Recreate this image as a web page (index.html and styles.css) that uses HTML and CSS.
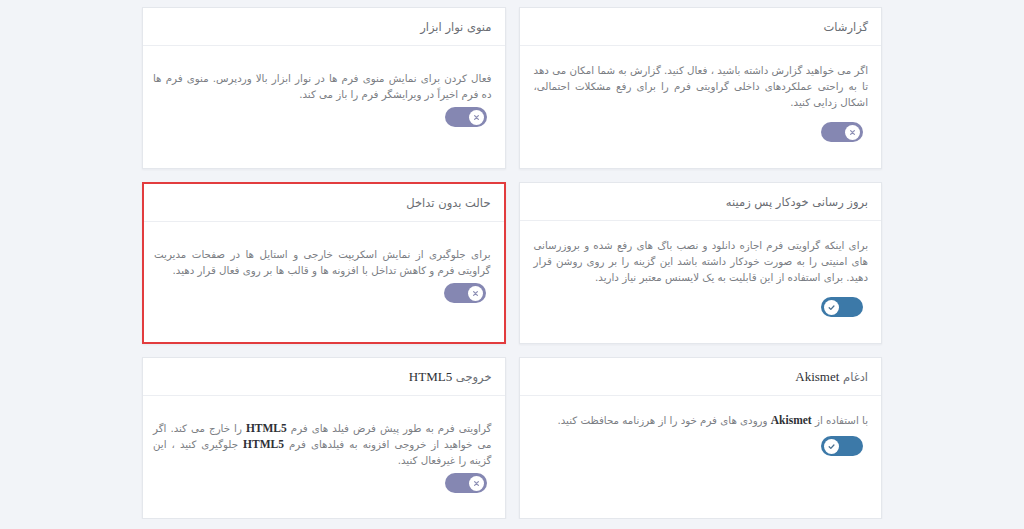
FILE: index.html
```html
<!DOCTYPE html>
<html lang="fa" dir="rtl">
<head>
<meta charset="utf-8">
<title>تنظیمات</title>
<link rel="stylesheet" href="styles.css">
</head>
<body>
<main class="grid">
  <section class="card">
    <header class="card-head"><span class="title">گزارشات</span></header>
    <div class="card-body">
      <p class="desc">اگر می خواهید گزارش داشته باشید ، فعال کنید. گزارش به شما امکان می دهد تا به راحتی عملکردهای داخلی گراویتی فرم را برای رفع مشکلات احتمالی، اشکال زدایی کنید.</p>
      <div class="toggle-row"><span class="toggle off"><span class="knob"><svg viewBox="0 0 10 10"><path d="M3.3 3.3l3.4 3.4M6.7 3.3l-3.4 3.4"/></svg></span></span></div>
    </div>
  </section>
  <section class="card">
    <header class="card-head"><span class="title">منوی نوار ابزار</span></header>
    <div class="card-body">
      <p class="desc">فعال کردن برای نمایش منوی فرم ها در نوار ابزار بالا وردپرس. منوی فرم ها ده فرم اخیراً در ویرایشگر فرم را باز می کند.</p>
      <div class="toggle-row"><span class="toggle off"><span class="knob"><svg viewBox="0 0 10 10"><path d="M3.3 3.3l3.4 3.4M6.7 3.3l-3.4 3.4"/></svg></span></span></div>
    </div>
  </section>
  <section class="card">
    <header class="card-head"><span class="title">بروز رسانی خودکار پس زمینه</span></header>
    <div class="card-body">
      <p class="desc">برای اینکه گراویتی فرم اجازه دانلود و نصب باگ های رفع شده و بروزرسانی های امنیتی را به صورت خودکار داشته باشد این گزینه را بر روی روشن قرار دهید. برای استفاده از این قابلیت به یک لایسنس معتبر نیاز دارید.</p>
      <div class="toggle-row"><span class="toggle on"><span class="knob"><svg viewBox="0 0 10 10"><path d="M2.9 5.2l1.5 1.5 2.8-3"/></svg></span></span></div>
    </div>
  </section>
  <section class="card card-marked">
    <header class="card-head"><span class="title">حالت بدون تداخل</span></header>
    <div class="card-body">
      <p class="desc">برای جلوگیری از نمایش اسکریپت خارجی و استایل ها در صفحات مدیریت گراویتی فرم و کاهش تداخل با افزونه ها و قالب ها بر روی فعال قرار دهید.</p>
      <div class="toggle-row"><span class="toggle off"><span class="knob"><svg viewBox="0 0 10 10"><path d="M3.3 3.3l3.4 3.4M6.7 3.3l-3.4 3.4"/></svg></span></span></div>
    </div>
  </section>
  <section class="card">
    <header class="card-head"><span class="title">ادغام <span class="latin">Akismet</span></span></header>
    <div class="card-body">
      <p class="desc">با استفاده از <span class="latin strong">Akismet</span> ورودی های فرم خود را از هرزنامه محافظت کنید.</p>
      <div class="toggle-row"><span class="toggle on"><span class="knob"><svg viewBox="0 0 10 10"><path d="M2.9 5.2l1.5 1.5 2.8-3"/></svg></span></span></div>
    </div>
  </section>
  <section class="card">
    <header class="card-head"><span class="title">خروجی <span class="latin">HTML5</span></span></header>
    <div class="card-body">
      <p class="desc">گراویتی فرم به طور پیش فرض فیلد های فرم <span class="latin strong">HTML5</span> را خارج می کند. اگر می خواهید از خروجی افزونه به فیلدهای فرم <span class="latin strong">HTML5</span> جلوگیری کنید ، این گزینه را غیرفعال کنید.</p>
      <div class="toggle-row"><span class="toggle off"><span class="knob"><svg viewBox="0 0 10 10"><path d="M3.3 3.3l3.4 3.4M6.7 3.3l-3.4 3.4"/></svg></span></span></div>
    </div>
  </section>
</main>
</body>
</html>
```

FILE: styles.css
```css
html, body {
  margin: 0;
  padding: 0;
}
body {
  background: #f2f4f8;
  font-family: "DejaVu Sans", "Noto Sans", sans-serif;
  color: #6b6e75;
  padding-top: 7px;
}
.grid {
  width: 740px;
  margin: 0 auto;
  display: grid;
  grid-template-columns: 1fr 1fr;
  grid-auto-rows: 162px;
  column-gap: 13px;
  row-gap: 13px;
}
.card {
  background: #ffffff;
  border: 1px solid #e4e7ec;
  box-shadow: 0 1px 2px rgba(30, 40, 60, 0.05);
  box-sizing: border-box;
  display: flex;
  flex-direction: column;
}
.card-marked {
  border: 2px solid #e23c3e;
}
.card-head {
  height: 37px;
  display: flex;
  align-items: center;
  padding: 0 13px;
  border-bottom: 1px solid #eceef2;
  flex-shrink: 0;
}
.title {
  font-size: 11.5px;
  color: #6a6d73;
}
.card-body {
  padding: 16px 13px 0 14px;
}
.card:nth-child(even) .card-body {
  padding-top: 24px;
  padding-left: 10px;
}
.desc {
  margin: 0;
  font-size: 10.25px;
  line-height: 16px;
  text-align: justify;
  color: #7a7d83;
}
.latin {
  font-family: "Liberation Serif", serif;
  color: #2e3035;
  font-size: 13px;
  line-height: 1;
}
.strong {
  font-weight: bold;
  font-size: 11.5px;
}
.toggle-row {
  display: flex;
  padding-right: 5px;
  margin-top: 12px;
}
.card:nth-child(even) .toggle-row {
  margin-top: 5px;
}
.card:nth-child(5) .toggle-row {
  margin-top: 8px;
}
.toggle {
  width: 42px;
  height: 20px;
  border-radius: 10px;
  display: flex;
  align-items: center;
  padding: 0 3px;
  box-sizing: border-box;
}
.toggle.off {
  background: #8587b2;
  justify-content: flex-start;
}
.toggle.on {
  background: #3c79a8;
  justify-content: flex-end;
}
.knob {
  width: 15px;
  height: 15px;
  border-radius: 50%;
  background: #ffffff;
  display: flex;
  align-items: center;
  justify-content: center;
}
.knob svg {
  width: 11px;
  height: 11px;
  fill: none;
  stroke-width: 1.2;
  stroke-linecap: round;
  stroke-linejoin: round;
}
.off .knob svg {
  stroke: #8f91b6;
}
.on .knob svg {
  stroke: #4a6f8e;
}
```
